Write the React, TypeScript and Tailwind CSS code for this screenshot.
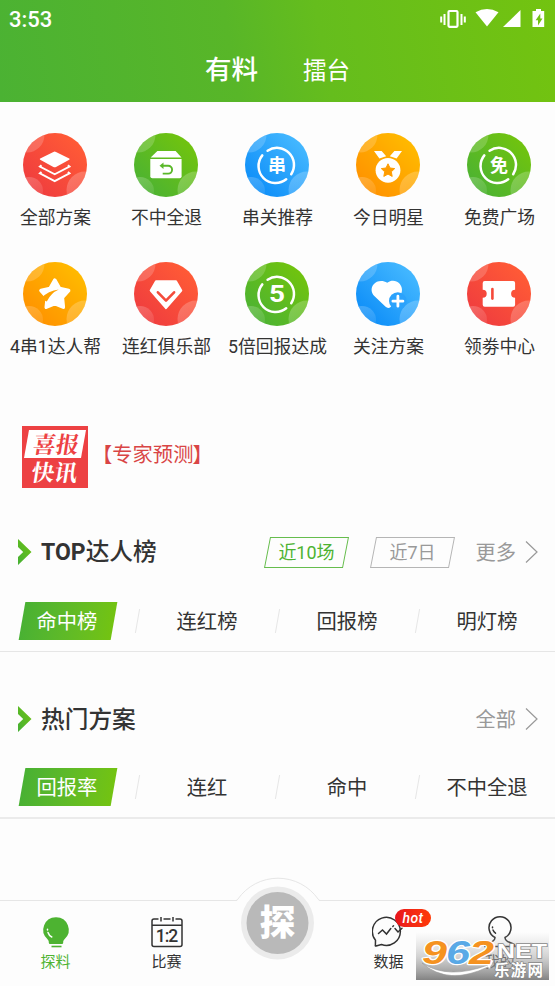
import type { ReactNode } from 'react';
import clsx from 'clsx';

type Tone = 'red' | 'green' | 'blue' | 'orange';

interface Entry {
  label: string;
  tone: Tone;
  icon: ReactNode;
}

const tones: Record<Tone, [string, string]> = {
  red: ['#f03e3e', '#ff5a36'],
  green: ['#4db331', '#70c30f'],
  blue: ['#0f8ff8', '#43b7ff'],
  orange: ['#ff9300', '#ffb900'],
};

function Ring({ children }: { children: ReactNode }) {
  return (
    <g>
      <path
        d="M17.3 22.4A17 17 0 0 0 41.2 46.3M22.6 17.7A17 17 0 0 1 46.2 41.2"
        fill="none"
        stroke="#fff"
        strokeWidth="2.5"
        strokeLinecap="round"
      />
      {children}
    </g>
  );
}

function RingText({ children }: { children: string }) {
  return (
    <Ring>
      <text x="32" y="38.6" textAnchor="middle" fontSize="18" fontWeight="700" fill="#fff">
        {children}
      </text>
    </Ring>
  );
}

const entries: Entry[] = [
  {
    label: '全部方案',
    tone: 'red',
    icon: (
      <g fill="#fff">
        <path d="M30.4 18.9q1.3-.7 2.6 0l13.2 6.6q1 .6 0 1.2L33 34q-1.3.7-2.6 0l-13.2-7.3q-1-.6 0-1.2z" />
        <path
          d="M18.5 32.2l-1.6 1.3 14.8 7.8 14.8-7.8-1.6-1.3M18.5 39l-1.6 1.3 14.8 7.8 14.8-7.8-1.6-1.3"
          fill="none"
          stroke="#fff"
          strokeWidth="1.9"
        />
      </g>
    ),
  },
  {
    label: '不中全退',
    tone: 'green',
    icon: (
      <g>
        <path d="M23.4 18h18.2l5.9 6.6H16.7z" fill="#fff" />
        <path d="M16.3 26h31.3v17.3a2 2 0 0 1-2 2H18.3a2 2 0 0 1-2-2z" fill="#fff" />
        <path d="M28 32.8h6.2a3.9 3.9 0 0 1 0 7.8h-5.5" fill="none" stroke="#5ab82a" strokeWidth="1.9" />
        <path d="M25.5 32.8l4-3.2v6.4z" fill="#5ab82a" />
      </g>
    ),
  },
  { label: '串关推荐', tone: 'blue', icon: <RingText>串</RingText> },
  {
    label: '今日明星',
    tone: 'orange',
    icon: (
      <g fill="#fff">
        <path d="M18 18h7.6l4.6 5.2-6.8 2.2zM46 18h-7.6l-4.6 5.2 6.8 2.2z" />
        <circle cx="32" cy="37.3" r="12.4" />
        <path
          d="M32 30.8l2 4.2 4.7.6-3.4 3.2.9 4.6-4.2-2.3-4.2 2.3.9-4.6-3.4-3.2 4.7-.6z"
          fill="#ff9d00"
          stroke="#ff9d00"
          strokeWidth="1"
          strokeLinejoin="round"
        />
      </g>
    ),
  },
  { label: '免费广场', tone: 'green', icon: <RingText>免</RingText> },
  {
    label: '4串1达人帮',
    tone: 'orange',
    icon: (
      <g>
        <path
          d="M31.8 18.2L36.6 26.6 45.6 28.600 39.300 35.500 40.300 45.200 31.800 41.700 23.300 45.200 24.300 35.500 18 28.600 27 26.600z"
          fill="#fff"
          stroke="#fff"
          strokeWidth="3.600"
          strokeLinejoin="round"
        />
        <path d="M17.500 36.800Q25.500 28.500 35.800 27.600 28 31 23.800 39.500z" fill="#ffa200" />
      </g>
    ),
  },
  {
    label: '连红俱乐部',
    tone: 'red',
    icon: (
      <g strokeLinejoin="round">
        <path d="M22 19.3h20l5.3 9.3L32 46.2 16.7 28.6z" fill="#fff" stroke="#fff" strokeWidth="2" />
        <path d="M23.9 30.3l8.1 8.3 8.1-8.3" fill="none" stroke="#f44b3b" strokeWidth="2.6" strokeLinecap="round" />
      </g>
    ),
  },
  {
    label: '5倍回报达成',
    tone: 'green',
    icon: (
      <Ring>
        <text x="24" y="40.3" fontSize="23" fontWeight="700" fill="#fff" textLength="16" lengthAdjust="spacingAndGlyphs">
          5
        </text>
      </Ring>
    ),
  },
  {
    label: '关注方案',
    tone: 'blue',
    icon: (
      <g>
        <path
          d="M31.2 20.8c4-3.2 9.4-2.4 12 .5 3.4 3.6 3.7 8.7 1 12.2L34.6 44.9c-1.4 1.5-3.6 1.2-5-.1L18.3 34c-3.3-3.3-3.6-8.3-.8-11.5 3.2-3.9 9.2-4.5 13.7-1.7z"
          fill="#fff"
        />
        <circle cx="41.8" cy="39" r="8.8" fill="#2ba2fc" />
        <path d="M36.9 39.2h10M41.9 34.2v10" stroke="#fff" strokeWidth="2.8" strokeLinecap="round" />
      </g>
    ),
  },
  {
    label: '领劵中心',
    tone: 'red',
    icon: (
      <g>
        <path
          d="M17.7 19h28.4a2 2 0 0 1 2 2v6.7a4 4 0 0 0 0 8v7a2 2 0 0 1-2 2H17.7a2 2 0 0 1-2-2v-7a4 4 0 0 0 0-8V21a2 2 0 0 1 2-2z"
          fill="#fff"
        />
        <path d="M25.4 27v9.6" stroke="#f5493a" strokeWidth="2.6" strokeLinecap="round" />
      </g>
    ),
  },
];

function EntryIcon({ id, tone, icon }: { id: string; tone: Tone; icon: ReactNode }) {
  const [from, to] = tones[tone];
  return (
    <svg viewBox="0 0 64 64" className="-ml-px h-16 w-16 shrink-0">
      <defs>
        <linearGradient id={id} x1="0.15" y1="0.85" x2="0.85" y2="0.15">
          <stop offset="0" stopColor={from} />
          <stop offset="1" stopColor={to} />
        </linearGradient>
        <linearGradient id={`${id}-shine`} x1="0" y1="0" x2="1" y2="1">
          <stop offset="0" stopColor="#fff" stopOpacity="0.25" />
          <stop offset="1" stopColor="#fff" stopOpacity="0.06" />
        </linearGradient>
        <clipPath id={`${id}-clip`}>
          <circle cx="32" cy="32" r="32" />
        </clipPath>
      </defs>
      <g clipPath={`url(#${id}-clip)`}>
        <rect width="64" height="64" fill={`url(#${id})`} />
        <circle cx="4" cy="2" r="17.5" fill="#fff" opacity="0.18" />
        <circle cx="6" cy="58" r="14" fill={`url(#${id}-shine)`} />
        <circle cx="62" cy="57" r="18.5" fill={`url(#${id}-shine)`} />
      </g>
      {icon}
    </svg>
  );
}

function StatusBar() {
  return (
    <div className="flex h-9 items-center justify-between pl-[9px] pr-[8px] pt-1">
      <span className="text-[22px] font-medium leading-none">3:53</span>
      <svg width="108" height="22" viewBox="0 0 108 22" fill="#fff">
        <path d="M2.2 7.5v6M5.5 5v11M22.5 5v11M25.8 7.5v6" stroke="#fff" strokeWidth="2" />
        <rect x="9.5" y="2" width="9" height="15.8" rx="1" fill="none" stroke="#fff" strokeWidth="2.2" />
        <path d="M36.5 3.2Q48 -3 59.5 3.2L48 17.5z" />
        <path d="M81.5 1v17H64z" />
        <path d="M97 0h5v2h3.2v16H93.500V2H97z" />
        <path d="M101.300 4.500v5h2.200l-4.500 7v-5.300h-2.400z" fill="#71c212" />
      </svg>
    </div>
  );
}

function SectionTitle({ title, more, children }: { title: ReactNode; more: string; children?: ReactNode }) {
  return (
    <div className="flex h-8 items-center pl-[18px] pr-[17px]">
      <svg width="14" height="26" viewBox="0 0 14 26">
        <defs>
          <linearGradient id="arrow" x1="0" y1="1" x2="1" y2="0">
            <stop stopColor="#45b035" />
            <stop offset="1" stopColor="#70c311" />
          </linearGradient>
        </defs>
        <path d="M0 0l13.500 13L0 26v-8l5.200-5L0 8z" fill="url(#arrow)" />
      </svg>
      <h2 className="ml-[9px] pt-px text-[23.7px] font-medium leading-8">{title}</h2>
      <div className="ml-auto flex items-center">
        {children}
        <span className="pt-px text-[20.3px] leading-8 text-[#999]">{more}</span>
        <svg width="13" height="24" viewBox="0 0 13 24" className="ml-[9px]" fill="none" stroke="#999" strokeWidth="1.2">
          <path d="M1 1.500L12 12 1 22.500" />
        </svg>
      </div>
    </div>
  );
}

function RangeButton({ label, active }: { label: string; active?: boolean }) {
  return (
    <button
      className={clsx(
        'h-[31px] w-[79px] -skew-x-[11deg] border',
        active ? 'border-[#66bd4d] text-[#4db331]' : 'border-[#b5b5b5] text-[#999]'
      )}
    >
      <span className="block skew-x-[11deg] text-[18px] leading-[29px]">{label}</span>
    </button>
  );
}

function Tabs({ items }: { items: string[] }) {
  return (
    <div className="-ml-[3px] grid w-[560px] grid-cols-4">
      {items.map((item, i) => (
        <div key={item} className="relative flex justify-center">
          <button
            className={clsx(
              'h-[38px] w-[92px] whitespace-nowrap text-[20.3px]',
              i === 0 && 'ml-px -skew-x-[10deg] bg-linear-to-r from-[#49b133] to-[#73c311] text-white'
            )}
          >
            <span className={clsx('-mx-2 block pt-px leading-[38px]', i === 0 && '-ml-[10px] skew-x-[10deg]')}>{item}</span>
          </button>
          {i < items.length - 1 && (
            <span className="absolute -right-px top-[7px] h-6 w-px -skew-x-[10deg] bg-[#e6e6e6]" />
          )}
        </div>
      ))}
    </div>
  );
}

function NavItem({ label, active, children }: { label: string; active?: boolean; children: ReactNode }) {
  return (
    <div className={clsx('flex flex-col items-center pt-[14px]', active ? 'text-[#4db331]' : 'text-[#333]')}>
      <svg width="34" height="34" viewBox="0 0 34 34" fill="none" stroke="currentColor" strokeWidth="1.5">
        {children}
      </svg>
      <span className="mt-[2px] text-[15px] leading-[22px]">{label}</span>
    </div>
  );
}

function Watermark() {
  return (
    <svg width="133" height="56" viewBox="0 -8 133 56" className="absolute bottom-[6px] right-[6px] overflow-visible">
      <defs>
        <linearGradient id="mark" x1="0" y1="0" x2="0" y2="1">
          <stop stopColor="#bbb" stopOpacity="0" />
          <stop offset="0.5" stopColor="#aaa" stopOpacity="0.5" />
          <stop offset="1" stopColor="#7c7c7c" stopOpacity="0.95" />
        </linearGradient>
      </defs>
      <rect width="133" height="48" fill="url(#mark)" />
      <path d="M6 31Q32 48 72 33l-2-3 8-2-5 10-1-3Q32 54 6 31z" fill="#fff" stroke="#999" strokeWidth="0.6" />
      <g
        fontFamily="Liberation Sans, sans-serif"
        fontWeight="700"
        fontStyle="italic"
        fontSize="34"
        stroke="#fff"
        strokeWidth="2.4"
        paintOrder="stroke"
        strokeLinejoin="round"
      >
        <text x="6" y="31.5" fill="#f59220" textLength="25" lengthAdjust="spacingAndGlyphs">9</text>
        <text x="30" y="31.5" fill="#59a9e6" textLength="24" lengthAdjust="spacingAndGlyphs">6</text>
        <text x="53" y="31.5" fill="#f59220" textLength="25" lengthAdjust="spacingAndGlyphs">2</text>
      </g>
      <g fill="#fff" stroke="#888" strokeWidth="1.4" paintOrder="stroke" fontWeight="700">
        <text x="81" y="26" fontSize="20" textLength="50" lengthAdjust="spacingAndGlyphs" fontFamily="Liberation Sans, sans-serif">
          NET
        </text>
        <text x="78" y="43.5" fontSize="15.5" textLength="49">乐游网</text>
      </g>
    </svg>
  );
}

function BottomNav() {
  return (
    <nav className="relative mt-auto grid h-[86px] grid-cols-5 border-t border-[#e6e6e6] bg-[#fdfdfd]">
      <NavItem label="探料" active>
        <path
          d="M17 2.2a12.6 12.6 0 0 0-8.5 22c1.3 1.3 1.3 2 1.3 3.5q0 1.3 1.3 1.3h11.8q1.3 0 1.3-1.3c0-1.5 0-2.2 1.3-3.5A12.6 12.6 0 0 0 17 2.2z"
          fill="currentColor"
          stroke="none"
        />
        <path d="M12.5 31.5h10" strokeWidth="1.6" />
        <path d="M8.5 14.2v.8M9 17.5q1 3.2 3.8 4.5" stroke="#fff" strokeLinecap="round" />
      </NavItem>
      <NavItem label="比赛">
        <path d="M8.5 4H4a2 2 0 0 0-2 2v23.5a2 2 0 0 0 2 2h26a2 2 0 0 0 2-2V6a2 2 0 0 0-2-2h-4.5M13.5 4h7M2 10.2h30M11 2v4.5M23 2v4.5" />
        <text x="5.8" y="26.8" textLength="22.5" fontSize="17.5" fontWeight="500" fill="currentColor" stroke="none">
          1:2
        </text>
      </NavItem>
      <div className="relative">
        <svg width="90" height="90" viewBox="0 0 90 90" className="absolute -top-[25px] left-1/2 -translate-x-1/2">
          <path d="M3.5 25.5A48 48 0 0 1 86.5 25.5V28h-83z" fill="#fdfdfd" />
          <path d="M0 24.5h2.5q1.5 0 2.3-1.3A49 49 0 0 1 85.2 23.2q.8 1.3 2.3 1.3H90" fill="none" stroke="#e6e6e6" />
          <circle cx="44.5" cy="47" r="36.5" fill="#ebebeb" />
          <circle cx="44.5" cy="47" r="31" fill="#b9b9b9" />
          <text x="44.5" y="60" textAnchor="middle" fontSize="36" fontWeight="900" fill="#fff">探</text>
        </svg>
      </div>
      <div className="relative">
        <NavItem label="数据">
          <path d="M3.5 25.2A14 14 0 1 1 9.5 29.5L4 31q-1 .2-.6-1z" strokeLinejoin="round" />
          <path d="M6.5 18.5l4-3.5 4 4 4.3-5.5M20.8 11.5l.7-.7M23 13.5l3 3.5 4-3.8" strokeLinecap="round" />
        </NavItem>
        <span className="absolute left-[62px] top-2 flex h-[18px] w-9 items-center justify-center rounded-full bg-linear-to-r from-[#e8131b] to-[#ff3a06] text-[14px] font-medium italic leading-none text-white">
          <span className="tracking-wide">hot</span>
        </span>
      </div>
      <NavItem label="我的">
        <path d="M12 22.500a11 11 0 1 1 10 0c0 3 2 4 5 5 3 1 5 2 5 4H2c0-2 2-3 5-4s5-2 5-5z" />
        <path d="M9.500 12v.8M10 15q.8 2 2.500 3.200" strokeLinecap="round" />
      </NavItem>
      <Watermark />
    </nav>
  );
}

export default function App() {
  return (
    <div className="relative flex h-[986px] w-[555px] flex-col overflow-hidden bg-[#fdfdfd] font-[Roboto,'Noto_Sans_CJK_SC',sans-serif] text-[#333]">
      <header className="h-[102px] bg-[linear-gradient(80deg,#4bb233,#58b628_42%,#65bd1d_58%,#73c310)] text-white">
        <StatusBar />
        <div className="flex items-center justify-center pt-[13px] leading-10">
          <span className="text-[26.5px] font-medium">有料</span>
          <span className="ml-[45px] pt-[2px] text-[23.5px]">擂台</span>
        </div>
      </header>

      <div className="mt-[31px] grid grid-cols-5 gap-y-[31px]">
        {entries.map(({ label, tone, icon }, i) => (
          <div key={label} className="flex h-[98px] flex-col items-center">
            <EntryIcon id={`entry-${i}`} tone={tone} icon={icon} />
            <span className="mt-[9px] whitespace-nowrap text-[17.8px] leading-6">{label}</span>
          </div>
        ))}
      </div>

      <div className="mt-[66px] flex h-[62px] items-center pl-[22px]">
        <svg width="66" height="62" viewBox="0 0 66 62" className="shrink-0" fontWeight="700" fontSize="23">
          <rect width="66" height="62" fill="#ed4143" />
          <path d="M7 4h57l-5 28H2z" fill="#fff" />
          <g transform="skewX(-9)" textAnchor="middle" className="font-['Noto_Serif_CJK_SC','Noto_Sans_CJK_SC',serif]">
            <text x="37" y="26.5" fill="#ed4143">喜报</text>
            <text x="40" y="55" fill="#fff">快讯</text>
          </g>
        </svg>
        <span className="ml-1 pb-1 text-[20.3px] text-[#d94545]">
          【专家预测<span className="-ml-px">】</span>
        </span>
      </div>

      <section className="mt-[48px] border-b border-[#e6e6e6] pb-[11px]">
        <SectionTitle
          title={
            <>
              <span className="text-[23px] font-bold">TOP</span>达人榜
            </>
          }
          more="更多"
        >
          <div className="mr-[23px] flex gap-[27px]">
            <RangeButton label="近10场" active />
            <RangeButton label="近7日" />
          </div>
        </SectionTitle>
        <div className="mt-[34px]">
          <Tabs items={['命中榜', '连红榜', '回报榜', '明灯榜']} />
        </div>
      </section>

      <section className="mt-[51px] border-b-2 border-[#ebebeb] pb-[11px]">
        <SectionTitle title="热门方案" more="全部" />
        <div className="mt-[33px]">
          <Tabs items={['回报率', '连红', '命中', '不中全退']} />
        </div>
      </section>

      <BottomNav />
    </div>
  );
}
